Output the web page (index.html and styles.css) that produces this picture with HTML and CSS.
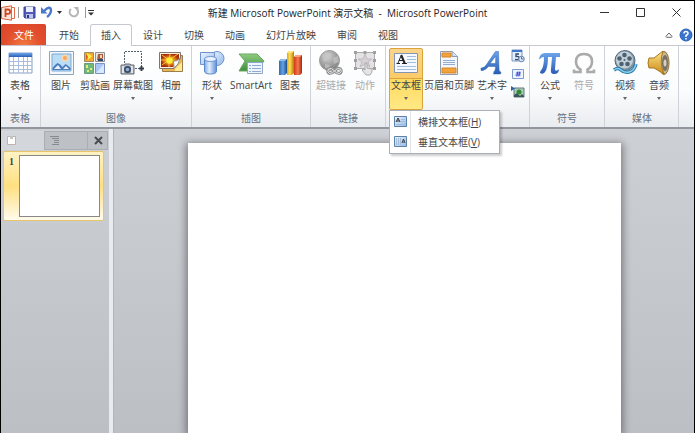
FILE: index.html
```html
<!DOCTYPE html>
<html lang="zh-CN">
<head>
<meta charset="utf-8">
<meta name="viewport" content="width=device-width, initial-scale=1">
<title>新建 Microsoft PowerPoint 演示文稿 - Microsoft PowerPoint</title>
<link rel="stylesheet" href="styles.css">
</head>
<body>
<svg class="defs" width="0" height="0" aria-hidden="true">
  <defs>
    <linearGradient id="blue" x1="0" y1="0" x2="0" y2="1"><stop offset="0" stop-color="#6da4ea"/><stop offset="1" stop-color="#2a5cb5"/></linearGradient>
    <linearGradient id="pale" x1="0" y1="0" x2="1" y2="1"><stop offset="0" stop-color="#eef5ff"/><stop offset="1" stop-color="#94b8ea"/></linearGradient>
    <linearGradient id="cyl" x1="0" y1="0" x2="1" y2="0"><stop offset="0" stop-color="#7fabe6"/><stop offset=".4" stop-color="#e3eefc"/><stop offset="1" stop-color="#5e90d8"/></linearGradient>
    <linearGradient id="barb" x1="0" y1="0" x2="1" y2="0"><stop offset="0" stop-color="#2c6cb8"/><stop offset=".5" stop-color="#66a3e0"/><stop offset="1" stop-color="#1d4e92"/></linearGradient>
    <linearGradient id="bary" x1="0" y1="0" x2="1" y2="0"><stop offset="0" stop-color="#e6a40c"/><stop offset=".4" stop-color="#ffdf5d"/><stop offset="1" stop-color="#b97b00"/></linearGradient>
    <linearGradient id="barr" x1="0" y1="0" x2="1" y2="0"><stop offset="0" stop-color="#d33a17"/><stop offset=".5" stop-color="#f47a50"/><stop offset="1" stop-color="#a82409"/></linearGradient>
    <linearGradient id="gold" x1="0" y1="0" x2="0" y2="1"><stop offset="0" stop-color="#ffe489"/><stop offset="1" stop-color="#c98a17"/></linearGradient>
    <linearGradient id="green" x1="0" y1="0" x2="0" y2="1"><stop offset="0" stop-color="#8fcb80"/><stop offset="1" stop-color="#3f8f3c"/></linearGradient>
    <radialGradient id="grayball" cx=".4" cy=".3" r=".8"><stop offset="0" stop-color="#d2d2d2"/><stop offset="1" stop-color="#777"/></radialGradient>
    <radialGradient id="sunset"><stop offset="0" stop-color="#ffef45"/><stop offset=".4" stop-color="#f2a51d"/><stop offset="1" stop-color="#a62c0c"/></radialGradient>
  </defs>
</svg>
<div class="window">
  <header class="titlebar">
    <div class="quick">
      <button class="app" aria-label="PowerPoint"><svg width="15" height="16" viewBox="0 0 15 16"><path d="M.5 2.500L10.500.8v14.400L.5 13.500z" fill="#f9e3d8" stroke="#d9603a"/><path d="M10.500 2.500h3v11h-3z" fill="#fff" stroke="#dd6c47"/><path d="M4.500 12V4.500H7a2 2 0 0 1 0 4.300H4.500" fill="none" stroke="#cf4520" stroke-width="1.800"/></svg></button>
      <span class="divider"></span>
      <button class="save" aria-label="保存"><svg width="13" height="13" viewBox="0 0 13 13"><path d="M1 1h11v11H2l-1-1z" fill="#5358b8" stroke="#4044a0"/><path d="M3 1h7v5H3z" fill="#e9efff"/><path d="M3 8h7v4H3z" fill="#b8c5e7"/><path d="M4 9h2v3H4z" fill="#343780"/></svg></button>
      <button class="undo" aria-label="撤消"><svg width="12" height="13" viewBox="0 0 12 13"><path d="M3 5Q9-1 10 4 10 8 6 11" fill="none" stroke="#4a78cc" stroke-width="2.400"/><path d="M0 1v6.500h6.500z" fill="#4a78cc"/></svg></button>
      <button class="more" aria-label="撤消列表"><svg width="5" height="3" viewBox="0 0 5 3"><path d="M0 0h5L2.500 3z" fill="#333"/></svg></button>
      <button class="redo" aria-label="重复"><svg width="12" height="13" viewBox="0 0 12 13"><path d="M3 3a4.200 4.200 0 1 0 6.500 1" fill="none" stroke="#b5b5b8" stroke-width="2"/><path d="M5.500 1h5v5z" fill="#b5b5b8"/></svg></button>
      <span class="divider"></span>
      <button class="customize" aria-label="自定义"><svg width="6" height="6" viewBox="0 0 6 6"><path d="M0 0h6v1H0zM0 2.500h6L3 5.500z" fill="#333"/></svg></button>
    </div>
    <h1>新建 Microsoft PowerPoint 演示文稿&nbsp; -&nbsp; Microsoft PowerPoint</h1>
    <div class="controls">
      <button aria-label="最小化"><svg width="9" height="9" viewBox="0 0 9 9"><path d="M0 4.500h9" stroke="#333"/></svg></button>
      <button aria-label="最大化"><svg width="9" height="9" viewBox="0 0 9 9"><path d="M.5.5h8v8h-8z" fill="none" stroke="#333"/></svg></button>
      <button aria-label="关闭"><svg width="9" height="9" viewBox="0 0 9 9"><path d="M.5.5l8 8m0-8l-8 8" stroke="#333"/></svg></button>
    </div>
  </header>

  <nav class="tabs" aria-label="功能区选项卡">
    <button class="file">文件</button>
    <button>开始</button>
    <button class="active" aria-current="page">插入</button>
    <button>设计</button>
    <button>切换</button>
    <button>动画</button>
    <button>幻灯片放映</button>
    <button>审阅</button>
    <button>视图</button>
    <div class="helpers">
      <button aria-label="折叠功能区"><svg width="8" height="6" viewBox="0 0 8 6"><path d="M.8 4.500L4 1l3.200 3.500-1 .8H1.800z" fill="#fff" stroke="#666"/></svg></button>
      <button aria-label="帮助"><svg width="14" height="14" viewBox="0 0 14 14"><circle cx="7" cy="7" r="6" fill="#3b74d0" stroke="#2a5fb4"/><path d="M5 5.500Q5 3.500 7 3.500T9 5.500Q9 6.500 7 7.500V9M7 10v1.500" fill="none" stroke="#fff" stroke-width="1.500"/></svg></button>
    </div>
  </nav>

  <div class="ribbon">
    <section class="group">
      <div class="tools">
        <button class="tool"><svg width="26" height="26" viewBox="0 0 26 26"><path d="M2 3h23v20H2z" fill="#fff" stroke="#879fc4"/><path d="M2 3h23v4H2z" fill="url(#blue)"/><path d="M2 11.500h23M2 15.500h23M2 19.500h23M6.500 7v16M11.500 7v16M16.500 7v16M20.500 7v16" stroke="#a9bddc" fill="none"/></svg><span>表格</span><i></i></button>
      </div>
      <h2>表格</h2>
    </section>

    <section class="group">
      <div class="tools">
        <button class="tool"><svg width="26" height="26" viewBox="0 0 26 26"><path d="M1.500 1.500h24v23h-24z" fill="#f4f8fc" stroke="#8ba6bf"/><path d="M4 4h19v17H4z" fill="#b9ddf7" stroke="#7da9ce"/><circle cx="17" cy="8" r="3.500" fill="#fbd6a4"/><circle cx="17" cy="8" r="2" fill="#f3a865"/><path d="M4.500 20v-2q3-4 5-5 3 1 5 4l3-3q2 1 5 4v2z" fill="#4c7cbc"/><path d="M6 19l4-4 3 4zM15 19l3-3 3 3z" fill="#e8f2ff"/></svg><span>图片</span></button>
        <button class="tool"><svg width="26" height="26" viewBox="0 0 26 26"><path d="M2.500 2.500h9v9h-9z" fill="#f5a72c" stroke="#9e8b6a"/><path d="M5 3l5 3-4 4z" fill="#ffef4e"/><path d="M4 4l2 3-2 3z" fill="#d95c1c"/><path d="M13.500 2.500h9v9h-9z" fill="#e9e5e1" stroke="#8d8f98"/><path d="M16 4h5v4l-3 3-3-1z" fill="#aa5a35"/><path d="M18 5h2v3h-2z" fill="#f6d3b4"/><path d="M16 9l5 0v2h-5z" fill="#34476c"/><path d="M2.500 13.500h9v10h-9z" fill="#6fba79" stroke="#6b9b85"/><path d="M4 15h2v3H4zM8 18h2v2H8zM5 20h2v2H5z" fill="#e2ec80"/><path d="M13.500 13.500h9v10h-9z" fill="#a9c6f6" stroke="#7c91c2"/><path d="M14 23l8-9v9z" fill="#d8e8ff"/></svg><span>剪贴画</span></button>
        <button class="tool wide"><svg width="26" height="26" viewBox="0 0 26 26"><path d="M4.500 13V1.500h17v15M15 18.500h5" fill="none" stroke="#555e6b" stroke-dasharray="2 1"/><path d="M21.500 16v5M19 18.500h5" stroke="#39424e" stroke-width="2"/><path d="M1 15h3l1-1h5l1 1h3v9H1z" fill="#aeb4bd" stroke="#646d79"/><path d="M2 16h2v7H2zM11 16h2v7h-2z" fill="#e0e4e8"/><circle cx="7.500" cy="19.500" r="3.500" fill="#3d4c61"/><circle cx="7.500" cy="19.500" r="1.800" fill="#8cb1de"/></svg><span>屏幕截图</span><i></i></button>
        <button class="tool"><svg width="26" height="26" viewBox="0 0 26 26"><path d="M4.500 5.500h20v16h-20z" fill="#e9b64f" stroke="#9b7e4b"/><path d="M17 19l7-7v9h-7z" fill="#ffe994"/><path d="M1.500 2.500h21v6L16 18.500H1.500z" fill="#f9efe0" stroke="#80766d"/><path d="M3 4h18v5l-6 8H3z" fill="url(#sunset)"/><path d="M11 10L4 5M11 10L4 15M11 10l9-6M11 10L12 4M11 10l-8 0M11 10l0 7" stroke="#ffba32"/><circle cx="11.500" cy="10.500" r="3.200" fill="#ffed38"/><path d="M16 18q0-5-1-7 4 1 7-3-1 7-6 10" fill="#fbfbfb" stroke="#8d8d87"/></svg><span>相册</span><i></i></button>
      </div>
      <h2>图像</h2>
    </section>

    <section class="group">
      <div class="tools">
        <button class="tool"><svg width="26" height="26" viewBox="0 0 26 26"><circle cx="18" cy="8.500" r="7" fill="url(#pale)" stroke="#6c94cf"/><path d="M1.500 2.500h14v12h-14z" fill="url(#pale)" stroke="#6c94cf"/><path d="M5.500 9v12q0 3 6 3t6-3V9z" fill="url(#cyl)" stroke="#5b88c8"/><ellipse cx="11.500" cy="9" rx="6" ry="2.500" fill="#e7f1ff" stroke="#6c94cf"/></svg><span>形状</span><i></i></button>
        <button class="tool smart"><svg width="28" height="26" viewBox="0 0 28 26"><path d="M2 4h18l7 7-7 10H2l6-10z" fill="url(#green)" stroke="#6aa866"/><path d="M10.500 12.500h15v11h-15z" fill="#eff5ff" stroke="#8ea6c8"/><path d="M12 15.500h2M12 18.500h2M12 21.500h2M15 15.500h9M15 18.500h9M15 21.500h9" stroke="#8fa9cf"/></svg><span>SmartArt</span></button>
        <button class="tool"><svg width="26" height="26" viewBox="0 0 26 26"><path d="M2 11l2-2h6v14l-2 2H2z" fill="url(#barb)"/><path d="M2 11l2-2h6l-2 2z" fill="#91bee9"/><path d="M10 3l2-2h5v22l-2 2h-5z" fill="url(#bary)"/><path d="M10 3l2-2h5l-2 2z" fill="#ffe779"/><path d="M17 7l2-2h6v18l-2 2h-6z" fill="url(#barr)"/><path d="M17 7l2-2h6l-2 2z" fill="#f8a183"/></svg><span>图表</span></button>
      </div>
      <h2>插图</h2>
    </section>

    <section class="group">
      <div class="tools">
        <button class="tool" disabled><svg width="26" height="26" viewBox="0 0 26 26"><circle cx="11.500" cy="10.500" r="10" fill="url(#grayball)" stroke="#999"/><path d="M4 5l5-3 5 2-3 5-5 3zM15 8l5-2 1 6-5 2zM7 14l5 1-1 4-4-1z" fill="#c4c4c4" opacity=".7"/><path d="M16.500 21q-3-4-6-2-2 3 1 4.500 3 0 5-2.500 3-4 6-2 2 3-1 4.500-3 0-5-2.500z" fill="none" stroke="#8f8f8f" stroke-width="3"/><path d="M16.500 21q-3-4-6-2-2 3 1 4.500 3 0 5-2.500 3-4 6-2 2 3-1 4.500-3 0-5-2.500z" fill="none" stroke="#e5e5e5"/></svg><span>超链接</span></button>
        <button class="tool" disabled><svg width="26" height="26" viewBox="0 0 26 26"><path d="M3.500 2.500h19v16h-19z" fill="#e5e2e5" stroke="#aaa"/><path d="M13 4l2 5h5l-4 3 2 5-5-3-5 3 2-5-4-3h5z" fill="#d6d1d4" stroke="#c0bbbf"/><path d="M2 1h3v3H2zM11.500 1h3v3h-3zM21 1h3v3h-3zM2 9h3v3H2zM21 9h3v3h-3zM2 17h3v3H2zM21 17h3v3h-3z" fill="#a0a0a0"/><path d="M13 13h2v5l5 1v3l-2 3h-4l-4-5 1-1 2 1z" fill="#e5e5e5" stroke="#aaa"/></svg><span>动作</span></button>
      </div>
      <h2>链接</h2>
    </section>

    <section class="group">
      <div class="tools">
        <div class="dropdown">
          <button class="tool open" aria-haspopup="menu" aria-expanded="true"><svg width="26" height="26" viewBox="0 0 26 26"><path d="M1.500 3.500h23v19h-23z" fill="#f5f9ff" stroke="#8295b4"/><path d="M14 6.500h9M14 9.500h9M14 12.500h9M4 16.500h19M4 19.500h19" stroke="#a3bddf"/><path d="M5 13L8.200 5.500M6 10.500h5M3.500 13.500h3.500M9 13.500h5" stroke="#222" fill="none"/><path d="M8.200 5L11.800 13.500" stroke="#222" stroke-width="2"/></svg><span>文本框</span><i></i></button>
          <div class="menu" role="menu">
            <button role="menuitem"><svg width="14" height="12" viewBox="0 0 14 12"><path d="M.5.5h12v10H.5z" fill="url(#pale)" stroke="#5d82a9"/><path d="M2 6l2-4 2 4M3 5h2" stroke="#333" fill="none"/><path d="M7 3.500h4M7 5.500h4M2 8.500h9" stroke="#a3bddd"/></svg><span>横排文本框(<u>H</u>)</span></button>
            <button role="menuitem"><svg width="14" height="12" viewBox="0 0 14 12"><path d="M.5.500h12v10H.5z" fill="url(#pale)" stroke="#5d82a9"/><path d="M2.500 2v7M4.500 2v7M6.500 2v7" stroke="#a3bddd"/><path d="M8 7l1.500-4L11 7M8.500 6h2" stroke="#444" fill="none"/></svg><span>垂直文本框(<u>V</u>)</span></button>
          </div>
        </div>
        <button class="tool extra"><svg width="26" height="26" viewBox="0 0 26 26"><path d="M4.500 1.500h12l5 5v18h-17z" fill="#f3f7fd" stroke="#8d9caf"/><path d="M16 1.500v5h5.500" fill="#d4e2f3" stroke="#8d9caf"/><path d="M6 3h9v4H6zM6 18h14v5H6z" fill="#f2a33b" stroke="#d68727"/><path d="M7 10.500h12M7 12.500h12M7 14.500h12" stroke="#94acd0"/></svg><span>页眉和页脚</span></button>
        <button class="tool"><svg width="26" height="26" viewBox="0 0 26 26"><path d="M2 18Q5 18.500 7.500 14.500L16.500 1.500H19.500L20 19Q20 22 22 22L21.500 24H14.500L15 21.500Q16.500 21 16.500 16.500H9.500Q7 19.500 4 20.500H2ZM11 13.500H16.500L16.800 6Z" fill="url(#blue)" stroke="#2b64b4" stroke-width=".5" fill-rule="evenodd"/></svg><span>艺术字</span><i></i></button>
        <div class="mini">
          <button aria-label="日期和时间"><svg width="14" height="14" viewBox="0 0 14 14"><path d="M1 1h10v11H1z" fill="#e4eefc" stroke="#7895c3"/><path d="M1 1h10v2H1z" fill="#3e79ca"/><path d="M8 5H5v2.500q3-.5 3 1.500t-4 1.500" fill="none" stroke="#344866" stroke-width="1.300"/><circle cx="10.500" cy="10" r="2.800" fill="#dce8f8" stroke="#6783ac"/><path d="M10.500 8v2h2" fill="none" stroke="#536e96"/></svg></button>
          <button aria-label="幻灯片编号"><svg width="14" height="14" viewBox="0 0 14 14"><path d="M1.500 2.500h11v9h-11z" fill="#edf4ff" stroke="#7c9bce"/><path d="M6.800 4.500L5.800 9.500M8.800 4.500L7.800 9.500M5 6h5M4.500 8h5" stroke="#343fc7" stroke-width=".9"/></svg></button>
          <button aria-label="对象"><svg width="14" height="14" viewBox="0 0 14 14"><path d="M3 3h10v9H3z" fill="#a9cdb4" stroke="#64777c"/><path d="M3 10l3-2 3 3 2-2 2 2v1H3z" fill="#3b555c"/><circle cx="8" cy="7" r="2.500" fill="#328838"/><path d="M0 1l4 2.500L0 6z" fill="#2762ac"/></svg></button>
        </div>
      </div>
    </section>

    <section class="group">
      <div class="tools">
        <button class="tool"><svg width="26" height="26" viewBox="0 0 26 26"><path d="M2 9q1-6 6-6h15v4h-4l-1 12q0 3 3 1l1-1q0 5-5 5-4 0-3-5l1-12h-4q0 11-3 15-2 3-5 1 0-2 2-4 2-4 2-12-3 0-4 2z" fill="url(#blue)"/></svg><span>公式</span><i></i></button>
        <button class="tool" disabled><svg width="26" height="26" viewBox="0 0 26 26"><path d="M3 19.500V22h6.500v-2.500Q5 17 5 11.500 5 4 13 4t8 7.500q0 5.500-4.500 8V22H23v-2.500" fill="none" stroke="#aaa" stroke-width="2.600"/></svg><span>符号</span></button>
      </div>
      <h2>符号</h2>
    </section>

    <section class="group">
      <div class="tools">
        <button class="tool"><svg width="26" height="26" viewBox="0 0 26 26"><circle cx="13" cy="10.500" r="10" fill="#8495a5" stroke="#53697d"/><circle cx="12.500" cy="10" r="8.500" fill="#c3d0d8"/><g fill="#4d6271"><circle cx="12.500" cy="5" r="2.300"/><circle cx="17.500" cy="8.500" r="2.300"/><circle cx="15.500" cy="14" r="2.300"/><circle cx="9.500" cy="14" r="2.300"/><circle cx="7.500" cy="8.500" r="2.300"/><circle cx="12.500" cy="10" r="1"/></g><path d="M2 20q4-3 7 0t8 2 7-8" stroke="#2a7fae" stroke-width="3.500" fill="none"/><path d="M2 20q4-3 7 0t8 2 7-8" stroke="#8fd0ea" stroke-width="1.500" fill="none"/></svg><span>视频</span><i></i></button>
        <button class="tool"><svg width="26" height="26" viewBox="0 0 26 26"><ellipse cx="18" cy="13" rx="5" ry="11.500" fill="#cbb88b" stroke="#876d39"/><path d="M3 8h5l9-7q-4 11 1 23L8 18H3q-2-5 0-10z" fill="url(#gold)" stroke="#a87722"/><ellipse cx="19" cy="13" rx="3" ry="8" fill="#777167"/><ellipse cx="19" cy="13" rx="1.500" ry="3.500" fill="#d5cfbc"/></svg><span>音频</span><i></i></button>
      </div>
      <h2>媒体</h2>
    </section>
  </div>

  <main class="workspace">
    <aside class="panel">
      <div class="panel-tabs">
        <button class="current" aria-label="幻灯片"><svg width="9" height="9" viewBox="0 0 9 9"><path d="M.5.5h8v8h-8z" fill="#fff" stroke="#bbb3ae"/><path d="M3 0h3v3H3z" fill="#c7c5c4"/></svg></button>
        <button aria-label="大纲"><svg width="10" height="9" viewBox="0 0 10 9"><path d="M0 .5h9M2 2.500h7M4 4.500h5M4 6.500h5M2 8.500h7" stroke="#858a90"/></svg></button>
        <button class="close" aria-label="关闭窗格"><svg width="9" height="9" viewBox="0 0 9 9"><path d="M1 1l7 7m0-7L1 8" stroke="#484b50" stroke-width="2"/></svg></button>
      </div>
      <button class="thumb"><b>1</b><span></span></button>
    </aside>
    <div class="canvas"><div class="slide"></div></div>
  </main>
</div>
</body>
</html>
```
FILE: styles.css
```css
* { box-sizing: border-box; }

body {
  margin: 0;
  font: 10px/14px "Open Sans", "Noto Sans CJK SC", sans-serif;
  color: #444;
}

button {
  border: 0;
  margin: 0;
  padding: 0;
  background: none;
  font: inherit;
  color: inherit;
  white-space: nowrap;
}

svg { display: block; flex: none; }
.defs { position: absolute; }

h1, h2 { margin: 0; font-size: 10px; font-weight: 400; }

.window {
  display: flex;
  flex-direction: column;
  min-height: 100vh;
  border: 1px solid #000;
  border-bottom: 0;
  background: #fff;
}

.titlebar {
  display: grid;
  grid-template-columns: 1fr auto 1fr;
  align-items: center;
  height: 23px;
}
.titlebar h1 { color: #222; white-space: nowrap; }

.quick { display: flex; align-items: center; }
.divider { width: 1px; height: 11px; background: #999; }
.app { margin-right: 2px; }
.save { margin-left: 4px; }
.undo { margin-left: 5px; }
.more { margin: 0 6px 0 4px; }
.redo { margin-right: 5px; }
.customize { margin-left: 2px; }

.controls { display: flex; justify-content: flex-end; }
.controls button {
  display: grid;
  place-items: center;
  width: 36px;
  height: 22px;
}

.tabs {
  display: flex;
  height: 22px;
  border-bottom: 1px solid #c5c9cf;
}
.tabs > button { padding: 0 10px 0 11px; }
.tabs > .file {
  width: 45px;
  margin-right: 2px;
  border-radius: 2px 2px 0 0;
  background: radial-gradient(ellipse at 50% 110%, #f47c40 0, #e2502e 55%, #d94329 100%);
  color: #fff;
}
.tabs > .active {
  margin: 0 0 -1px 1px;
  padding: 0 10px 1px;
  border: 1px solid #c5c9cf;
  border-bottom: 0;
  border-radius: 3px 3px 0 0;
  background: #fff;
}
.helpers {
  display: flex;
  align-items: center;
  gap: 6px;
  margin-left: auto;
  padding-right: 1px;
}

.ribbon {
  display: flex;
  background: linear-gradient(#fff, #fbfcfd 55%, #e9ecf0);
  border-bottom: 2px solid #92979d;
}
.group {
  display: flex;
  flex-direction: column;
  height: 81px;
  padding: 2px 3px;
  border-right: 1px solid #cfd3d9;
}
.group:first-child { padding-left: 2px; }
.group:last-child { padding-right: 2px; }
.group h2 {
  margin-top: auto;
  text-align: center;
  color: #667080;
}
.tools { display: flex; }
.tool {
  display: flex;
  flex-direction: column;
  align-items: center;
  width: 34px;
  height: 62px;
  padding-top: 2px;
}
.tool span { margin-top: 2px; }
.tool i {
  margin-top: 5px;
  border: 2px solid transparent;
  border-top: 3px solid #666;
  border-bottom: 0;
}
.tool:disabled { color: #aaa; }
.wide { width: 42px; }
.smart { width: 44px; }
.extra { width: 52px; }

.dropdown { position: relative; }
.open {
  padding-top: 1px;
  border: 1px solid #d9a43c;
  border-radius: 2px;
  background: linear-gradient(#fbd58c, #fbcb68 48%, #d9a43c 48%, #d9a43c 50%, #ffda60 50%, #ffe985);
}
.menu {
  position: absolute;
  z-index: 1;
  top: 62px;
  left: 0;
  padding: 1px;
  border: 1px solid #a9b0b9;
  background: linear-gradient(90deg, #fff 20px, #e2e4e7 20px, #e2e4e7 21px, #fff 21px);
  box-shadow: 2px 2px 2px #0003;
}
.menu button {
  display: flex;
  align-items: center;
  gap: 10px;
  width: 107px;
  height: 20px;
  padding-left: 3px;
}

.mini {
  display: flex;
  flex-direction: column;
  gap: 4px;
  padding: 1px 1px 0 2px;
}

.workspace {
  display: flex;
  flex: 1;
  background: linear-gradient(#cdd0d5, #bcc0c5);
}
.panel {
  width: 112px;
  padding: 2px 1px 0 0;
  border-right: 4px solid #e8ebef;
}
.panel-tabs { display: flex; height: 19px; }
.panel-tabs button {
  display: flex;
  flex: 1;
  align-items: center;
  padding-left: 5px;
  border: solid #aaaeb4;
  border-width: 1px 0 1px 1px;
  background: #bdc1c6;
}
.panel-tabs .current { border-color: #d5d8dc; background: #d3d6db; }
.panel-tabs .close {
  flex: 0 0 21px;
  padding-left: 6px;
  border-right-width: 1px;
}
.thumb {
  display: flex;
  width: 101px;
  height: 70px;
  margin: 1px 0 0 2px;
  padding: 3px 3px 3px 2px;
  border: 1px solid #eac568;
  border-radius: 2px;
  background: linear-gradient(#fff3c3, #ffdf80 50%, #fffbed);
}
.thumb b {
  width: 13px;
  padding-left: 3px;
  font-family: "Liberation Serif", serif;
  text-align: left;
}
.thumb span {
  flex: 1;
  align-self: stretch;
  border: 1px solid #888;
  background: #fff;
}
.canvas {
  display: flex;
  flex: 1;
  padding: 14px 73px 0 74px;
  border-left: 1px solid #b2b6bb;
}
.slide {
  flex: 1;
  background: #fff;
  box-shadow: 0 2px 8px 2px #0006;
}
```
